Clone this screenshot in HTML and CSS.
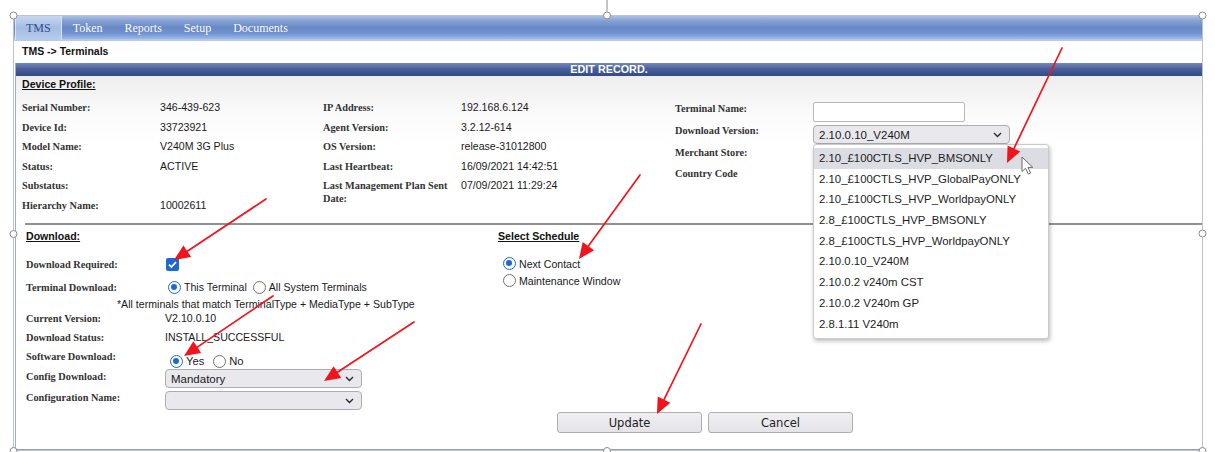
FILE: index.html
```html
<!DOCTYPE html>
<html lang="en">
<head>
<meta charset="utf-8">
<title>TMS - Terminals</title>
<link rel="stylesheet" href="styles.css">
</head>
<body>
<div class="frame">
  <nav class="tabs">
    <a class="tab active">TMS</a>
    <a class="tab">Token</a>
    <a class="tab">Reports</a>
    <a class="tab">Setup</a>
    <a class="tab">Documents</a>
  </nav>
  <div class="crumb">TMS -&gt; Terminals</div>

  <main class="panel">
    <div class="bar">EDIT RECORD.</div>

    <section class="profile">
      <h3 class="sec-title">Device Profile:</h3>
      <div class="cols">
        <div class="col col-a">
          <span class="lbl">Serial Number:</span><span class="val">346-439-623</span>
          <span class="lbl">Device Id:</span><span class="val">33723921</span>
          <span class="lbl">Model Name:</span><span class="val">V240M 3G Plus</span>
          <span class="lbl">Status:</span><span class="val">ACTIVE</span>
          <span class="lbl">Substatus:</span><span class="val"></span>
          <span class="lbl">Hierarchy Name:</span><span class="val">10002611</span>
        </div>
        <div class="col col-b">
          <span class="lbl">IP Address:</span><span class="val">192.168.6.124</span>
          <span class="lbl">Agent Version:</span><span class="val">3.2.12-614</span>
          <span class="lbl">OS Version:</span><span class="val">release-31012800</span>
          <span class="lbl">Last Heartbeat:</span><span class="val">16/09/2021 14:42:51</span>
          <span class="lbl wrap">Last Management Plan Sent Date:</span><span class="val wrap">07/09/2021 11:29:24</span>
        </div>
        <div class="col col-c">
          <span class="lbl">Terminal Name:</span><span class="cell cell-input"><input class="text-input" type="text"></span>
          <span class="lbl">Download Version:</span>
          <span class="cell cell-select">
            <span class="select version"><span class="select-text">2.10.0.10_V240M</span><svg class="chev" width="9" height="6" viewBox="0 0 9 6"><path d="M1 1l3.5 3.5L8 1" /></svg></span>
          </span>
          <span class="lbl">Merchant Store:</span><span class="cell"></span>
          <span class="lbl">Country Code</span><span class="cell"></span>
        </div>
      </div>
    </section>

    <hr class="divider">

    <section class="download">
      <div class="dl-main">
        <h3 class="sec-title">Download:</h3>
        <div class="row r-req">
          <span class="lbl">Download Required:</span>
          <span class="checkbox"><svg width="13" height="13" viewBox="0 0 13 13"><path d="M3 6.6l2.4 2.4L10 4.2" /></svg></span>
        </div>
        <div class="row r-term">
          <span class="lbl">Terminal Download:</span>
          <span class="opts">
            <span class="opt"><span class="radio on"></span>This Terminal</span>
            <span class="opt gap-6"><span class="radio"></span>All System Terminals</span>
          </span>
        </div>
        <div class="row r-note">*All terminals that match TerminalType + MediaType + SubType</div>
        <div class="row r-cur">
          <span class="lbl">Current Version:</span><span class="val">V2.10.0.10</span>
        </div>
        <div class="row r-status">
          <span class="lbl">Download Status:</span><span class="val">INSTALL_SUCCESSFUL</span>
        </div>
        <div class="row r-sw">
          <span class="lbl">Software Download:</span>
          <span class="opts yesno">
            <span class="opt"><span class="radio on"></span>Yes</span>
            <span class="opt gap-9"><span class="radio"></span>No</span>
          </span>
        </div>
        <div class="row r-cfg">
          <span class="lbl">Config Download:</span>
          <span class="select small"><span class="select-text">Mandatory</span><svg class="chev" width="9" height="6" viewBox="0 0 9 6"><path d="M1 1l3.5 3.5L8 1" /></svg></span>
        </div>
        <div class="row r-cfgname">
          <span class="lbl">Configuration Name:</span>
          <span class="select small"><span class="select-text"></span><svg class="chev" width="9" height="6" viewBox="0 0 9 6"><path d="M1 1l3.5 3.5L8 1" /></svg></span>
        </div>
      </div>

      <div class="dl-side">
        <h3 class="sec-title">Select Schedule</h3>
        <div class="schedule">
          <span class="opt"><span class="radio on"></span>Next Contact</span>
          <span class="opt"><span class="radio"></span>Maintenance Window</span>
        </div>
      </div>
    </section>

    <div class="actions">
      <button class="btn" type="button">Update</button>
      <button class="btn" type="button">Cancel</button>
    </div>
  </main>
</div>

<!-- open list of the Download Version select -->
<ul class="dropdown">
  <li class="hover">2.10_£100CTLS_HVP_BMSONLY</li>
  <li>2.10_£100CTLS_HVP_GlobalPayONLY</li>
  <li>2.10_£100CTLS_HVP_WorldpayONLY</li>
  <li>2.8_£100CTLS_HVP_BMSONLY</li>
  <li>2.8_£100CTLS_HVP_WorldpayONLY</li>
  <li>2.10.0.10_V240M</li>
  <li>2.10.0.2 v240m CST</li>
  <li>2.10.0.2 V240m GP</li>
  <li>2.8.1.11 V240m</li>
</ul>

<!-- selection frame handles -->
<svg class="handles" width="1215" height="452" viewBox="0 0 1215 452">
  <line x1="607" y1="0" x2="607" y2="11.5" stroke="#8a8a8a" stroke-width="1"/>
  <g fill="#fff" stroke="#8a8a8a" stroke-width="1">
    <circle cx="13.5" cy="15.5" r="3.5"/>
    <circle cx="607" cy="15.5" r="3.5"/>
    <circle cx="1202.5" cy="15.5" r="3.5"/>
    <circle cx="13.5" cy="234" r="3.5"/>
    <circle cx="1202.5" cy="233.5" r="3.5"/>
    <circle cx="13.5" cy="451" r="3.5"/>
    <circle cx="607" cy="451" r="3.5"/>
    <circle cx="1202.5" cy="451" r="3.5"/>
  </g>
</svg>

<!-- red callout arrows -->
<svg class="marks" width="1215" height="452" viewBox="0 0 1215 452">
  <g stroke="#f0141c" stroke-width="1.7" fill="none" stroke-linecap="round">
    <line x1="1062" y1="48" x2="1013.9" y2="148.6"/>
    <line x1="266" y1="199" x2="187.3" y2="251.2"/>
    <line x1="640" y1="175" x2="588.4" y2="246.1"/>
    <line x1="273" y1="296" x2="197.3" y2="347.1"/>
    <line x1="414" y1="322" x2="337.4" y2="372.2"/>
    <line x1="701" y1="324" x2="664" y2="399.6"/>
  </g>
  <g fill="#f0141c">
    <polygon points="1007,163 1020.2,151.6 1007.6,145.6"/>
    <polygon points="174,260 191.2,257 183.4,245.4"/>
    <polygon points="579,259 594.1,250.2 582.7,242"/>
    <polygon points="184,356 201.2,352.9 193.4,341.3"/>
    <polygon points="324,381 341.2,378.1 333.6,366.3"/>
    <polygon points="657,414 670.3,402.7 657.7,396.5"/>
  </g>
</svg>

<!-- mouse pointer over the list -->
<svg class="pointer" width="14" height="20" viewBox="0 0 14 20">
  <path d="M1 1 L1 15.5 L4.6 12.3 L7.2 18 L9.6 17 L7 11.4 L11.8 11.4 Z" fill="#fff" stroke="#6a6a6a" stroke-width="1" stroke-linejoin="round"/>
</svg>
</body>
</html>
```

FILE: styles.css
```css
* { box-sizing: border-box; }

html, body {
  margin: 0;
  background: #fff;
}

body {
  position: relative;
  width: 1215px;
  height: 452px;
  overflow: hidden;
  font-family: "Liberation Sans", Arial, sans-serif;
  color: #1a1a1a;
}

/* outer picture frame */
.frame {
  margin: 15px 0 0 13px;
  width: 1190px;
  border: 1px solid #c2c2c2;
}

/* top navigation */
.tabs {
  display: flex;
  height: 25px;
  padding-left: 1px;
  background: linear-gradient(to bottom, #adc1e4 0%, #88a3d5 18%, #6889c7 48%, #7192ce 72%, #99b6e6 94%, #bed1f0 100%);
  border-bottom: 1px solid #b5cbee;
}

.tab {
  padding: 0 11px;
  font: 12px/24px "Liberation Serif", "Times New Roman", serif;
  color: #fff;
  text-shadow: 0 0 1px rgba(60, 90, 150, .35);
}

.tab.active {
  padding: 0 10px;
  color: #2d4f8e;
  text-shadow: none;
  background: linear-gradient(to bottom, #c8d7f0 0%, #a4bce4 50%, #b6cbee 100%);
  border-left: 1px solid #dbe5f6;
  border-right: 1px solid #dbe5f6;
}

.crumb {
  height: 22px;
  padding-left: 8px;
  font: bold 10.5px/21px "Liberation Sans", Arial, sans-serif;
  color: #111;
}

/* edit panel */
.panel {
  display: block;
  margin-left: 1px;
  border-left: 1px solid #9fb0cf;
  border-bottom: 1px solid #8ea2c9;
}

.bar {
  height: 13px;
  background: linear-gradient(to bottom, #7488ba 0%, #4a5f9b 45%, #334a88 100%);
  color: #fff;
  font: bold 10.8px/13px "Liberation Sans", Arial, sans-serif;
  text-align: center;
}

.sec-title {
  margin: 0;
  font: bold 10.6px/12px "Liberation Sans", Arial, sans-serif;
  text-decoration: underline;
  color: #111;
}

.lbl {
  font-family: "Liberation Serif", "Times New Roman", serif;
  font-weight: bold;
  font-size: 10.3px;
  color: #333;
}

.val {
  font-size: 10.6px;
  color: #1a1a1a;
}

/* device profile */
.profile {
  height: 147px;
  padding: 2px 0 0 6px;
  background: linear-gradient(to bottom, #eeeeee 0%, #fbfbfb 40px, #ffffff 70px);
}

.cols {
  display: flex;
  margin-top: 8px;
}

.col {
  display: grid;
  grid-template-columns: 138px 1fr;
  grid-auto-rows: 19.6px;
  line-height: 19.6px;
}

.col-a { width: 301px; }
.col-b { width: 352px; }
.col-c {
  flex: 1;
  grid-template-rows: 22px 22px 21px 21px;
}

.col-b .wrap {
  padding-top: 3px;
  line-height: 13px;
  padding-right: 6px;
}

.col-c > :nth-child(1), .col-c > :nth-child(2) { line-height: 22px; }
.col-c > :nth-child(3), .col-c > :nth-child(4) { line-height: 22px; }
.col-c > :nth-child(5), .col-c > :nth-child(6),
.col-c > :nth-child(7), .col-c > :nth-child(8) { line-height: 21px; }

.cell { display: block; line-height: normal; }
.cell-input { padding-top: 4px; }
.cell-select { padding-top: 5px; }

.text-input {
  display: block;
  width: 152px;
  height: 20px;
  margin: 0;
  border: 1px solid #b9b9b9;
  border-radius: 2px;
  background: #fff;
}

/* select look-alike */
.select {
  display: flex;
  align-items: center;
  justify-content: space-between;
  height: 19px;
  padding: 0 7px 0 5px;
  border: 1px solid #acacb4;
  border-radius: 4px;
  background: #e9e9ed;
  font-size: 11.5px;
  color: #1a1a1a;
}

.select.version { width: 197px; }
.select.small { width: 197px; }

.chev path {
  fill: none;
  stroke: #2a2a2a;
  stroke-width: 1.4;
}

.divider {
  height: 2px;
  margin: 0 0 0 9px;
  border: 0;
  background: #919191;
}

/* download section */
.download {
  display: flex;
  height: 186px;
  padding: 5px 0 0 10px;
}

.download .sec-title { line-height: 13px; }

.dl-main { width: 472px; }

.dl-main .sec-title { margin-bottom: 11px; }

.row {
  display: flex;
}

.row .lbl {
  width: 139px;
  flex: none;
}

.r-req { height: 20px; align-items: center; }
.r-term { height: 20px; margin-top: 3px; align-items: center; }
.r-note {
  height: 14px;
  padding: 1px 0 0 91px;
  font-size: 10.6px;
  line-height: 13px;
}
.r-cur { height: 14px; align-items: center; }
.r-status { height: 20px; margin-top: 2px; align-items: center; }

.r-sw { height: 22px; }
.r-sw .lbl { padding-top: 3px; line-height: 13px; }
.r-sw .opts { padding-top: 7px; line-height: 13px; }

.r-cfg { height: 20px; }
.r-cfg .lbl { padding-top: 1px; line-height: 13px; }

.r-cfgname { height: 22px; }
.r-cfgname .lbl { padding-top: 2px; line-height: 13px; }
.r-cfgname .select { margin-top: 2px; }

.checkbox {
  display: flex;
  width: 13px;
  height: 13px;
  margin-left: 1px;
  border-radius: 2px;
  background: #1b69d6;
}

.checkbox path {
  fill: none;
  stroke: #fff;
  stroke-width: 1.8;
}

.opts {
  display: flex;
  align-items: center;
  font-size: 10.6px;
}

.opt {
  display: inline-flex;
  align-items: center;
  gap: 3px;
  font-size: 10.6px;
}

.r-term .opts { padding-left: 3px; }
.yesno { padding-left: 5px; }
.yesno .opt { font-size: 11.2px; }
.gap-6 { margin-left: 6px; }
.gap-9 { margin-left: 9px; }

.radio {
  position: relative;
  width: 13px;
  height: 13px;
  flex: none;
  border: 1.3px solid #707070;
  border-radius: 50%;
  background: #fff;
}

.radio.on { border: 1.6px solid #1b69d6; }

.radio.on::after {
  content: "";
  position: absolute;
  left: 2px;
  top: 2px;
  width: 6px;
  height: 6px;
  border-radius: 50%;
  background: #1b69d6;
}

.dl-side { flex: 1; }

.schedule {
  display: flex;
  flex-direction: column;
  align-items: flex-start;
  margin-top: 12px;
  padding-left: 5px;
}

.schedule .opt { height: 17px; }

/* form buttons */
.actions {
  display: flex;
  gap: 6px;
  height: 38px;
  padding: 1px 0 0 541px;
}

.btn {
  width: 145px;
  height: 21px;
  margin: 0;
  padding: 0;
  border: 1px solid #adadb3;
  border-radius: 3px;
  background: linear-gradient(to bottom, #f0f0f3, #e3e3e8);
  font: 11.5px "DejaVu Sans", Verdana, sans-serif;
  color: #222;
}

/* open dropdown list */
.dropdown {
  position: absolute;
  left: 813px;
  top: 144px;
  width: 236px;
  height: 195px;
  margin: 0;
  padding: 3px 0 0;
  list-style: none;
  background: #fff;
  border: 1px solid #cbcbcb;
  border-radius: 3px;
  box-shadow: 1px 2px 4px rgba(0, 0, 0, .28);
}

.dropdown li {
  height: 20.7px;
  padding-left: 5px;
  font-size: 11.4px;
  line-height: 20px;
  color: #1d1d1d;
  white-space: nowrap;
}

.dropdown li.hover { background: #dcdce3; }

.handles, .marks {
  position: absolute;
  left: 0;
  top: 0;
  pointer-events: none;
}

.pointer {
  position: absolute;
  left: 1021px;
  top: 156px;
}
```
